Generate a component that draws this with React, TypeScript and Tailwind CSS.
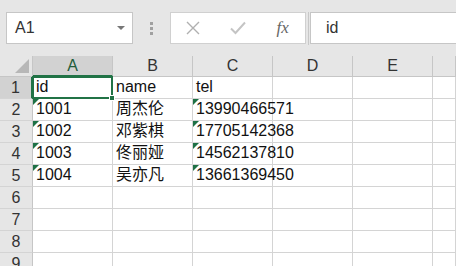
import React from "react";

const font = { fontFamily: '"Liberation Sans", Arial, "Noto Sans CJK SC", sans-serif' };

const cols = ["A", "B", "C", "D", "E", ""];
const data: string[][] = [
  ["id", "name", "tel"],
  ["1001", "周杰伦", "13990466571"],
  ["1002", "邓紫棋", "17705142368"],
  ["1003", "佟丽娅", "14562137810"],
  ["1004", "吴亦凡", "13661369450"],
];

function Tri() {
  return (
    <div className="absolute left-0 top-0 w-0 h-0 border-t-[6px] border-t-[#1e7145] border-r-[6px] border-r-transparent" />
  );
}

export default function App() {
  const rows = Array.from({ length: 9 }, (_, i) => i + 1);
  return (
    <div className="w-[456px] h-[266px] overflow-hidden bg-white text-[#222]" style={font}>
      {/* formula bar */}
      <div className="h-[56px] bg-[#e6e6e6] flex items-start pt-[12px] pl-[6px]">
        <div className="w-[127px] h-[32px] bg-white border border-[#c6c6c6] flex items-center pl-[8px] pr-[7px] text-[16px] text-[#333]">
          <span className="flex-1">A1</span>
          <div className="w-0 h-0 border-l-[4px] border-l-transparent border-r-[4px] border-r-transparent border-t-[4px] border-t-[#777]" />
        </div>
        <div className="w-[37px] h-[32px] flex flex-col items-center justify-center gap-[2px]">
          <div className="w-[3px] h-[3px] bg-[#a0a0a0]" />
          <div className="w-[3px] h-[3px] bg-[#a0a0a0]" />
          <div className="w-[3px] h-[3px] bg-[#a0a0a0]" />
        </div>
        <div className="w-[136px] h-[32px] bg-white border border-[#d0d0d0] flex items-center">
          <div className="w-[45px] flex justify-center">
            <svg width="14" height="14" viewBox="0 0 14 14">
              <path d="M1 1L13 13M13 1L1 13" stroke="#b0b0b0" strokeWidth="1.4" fill="none" />
            </svg>
          </div>
          <div className="w-[45px] flex justify-center">
            <svg width="16" height="14" viewBox="0 0 16 14">
              <path d="M1 7.5L5.5 12L15 1.5" stroke="#c4c4c4" strokeWidth="2" fill="none" />
            </svg>
          </div>
          <div className="w-[45px] flex justify-center">
            <span className="italic text-[17px] text-[#666]" style={{ fontFamily: '"Liberation Serif", "Times New Roman", serif' }}>
              fx
            </span>
          </div>
        </div>
        <div className="w-[4px] h-[33px] flex justify-center">
          <div className="w-[1px] h-full bg-[#c8c8c8]" />
        </div>
        <div className="flex-1 h-[32px] bg-white border border-[#c6c6c6] border-r-0 flex items-center pl-[15px] text-[16px] text-[#333]">
          id
        </div>
      </div>

      {/* grid */}
      <div className="grid grid-cols-[33px_80px_80px_80px_80px_80px_1fr] grid-rows-[21px] auto-rows-[22px]">
        {/* corner */}
        <div className="relative bg-[#e6e6e6] border-r border-b border-[#c6c6c6]">
          <div className="absolute right-[3px] bottom-[3px] w-0 h-0 border-l-[14px] border-l-transparent border-b-[14px] border-b-[#b7b7b7]" />
        </div>
        {cols.map((c, i) => (
          <div
            key={"h" + i}
            className={
              "flex items-center justify-center text-[16px] border-r border-[#c6c6c6] " +
              (i === 0
                ? "bg-[#d2d2d2] text-[#225c3a] border-b-2 border-b-[#217346]"
                : "bg-[#e6e6e6] text-[#333] border-b border-b-[#c6c6c6]")
            }
          >
            {c}
          </div>
        ))}
        {rows.map((r) => (
          <React.Fragment key={r}>
            <div
              className={
                "flex items-center justify-center text-[16px] text-[#333] border-b border-[#d4d4d4] " +
                (r === 1 ? "bg-[#d2d2d2] border-r-2 border-r-[#217346]" : "bg-[#e6e6e6] border-r border-r-[#c6c6c6]")
              }
            >
              {r}
            </div>
            {cols.map((_, ci) => {
              const v = data[r - 1]?.[ci] ?? "";
              const tri = r >= 2 && r <= 5 && (ci === 0 || ci === 2);
              return (
                <div
                  key={ci}
                  className="relative border-r border-b border-[#d4d4d4] flex items-end pl-[3px] pb-[1px] text-[16px] leading-[20px] text-[#111] whitespace-nowrap overflow-visible"
                >
                  {tri && <Tri />}
                  <span className="relative z-[1]">{v}</span>
                  {r === 1 && ci === 0 && (
                    <div className="absolute -left-[1px] -top-[1px] -right-[1px] -bottom-[1px] border-2 border-[#217346] z-[2]">
                      <div className="absolute -right-[4px] -bottom-[4px] w-[6px] h-[6px] bg-[#217346] border border-white" />
                    </div>
                  )}
                </div>
              );
            })}
          </React.Fragment>
        ))}
      </div>
    </div>
  );
}
